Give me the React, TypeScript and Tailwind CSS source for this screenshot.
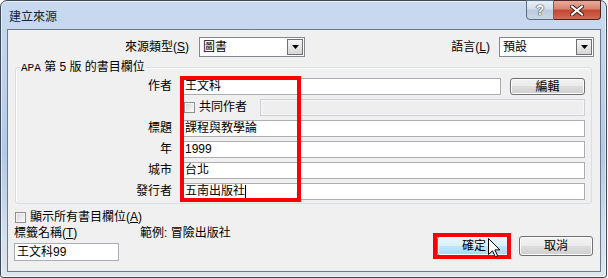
import React from "react";

function Checkbox() {
  return (
    <span className="block w-[11px] h-[11px] shrink-0 border border-[#8f8f8f] bg-linear-to-br from-[#d6d6d6] to-[#fbfbfb] shadow-[inset_0_0_0_1px_#f4f4f4]" />
  );
}

function Combo({ value, width }: { value: string; width: string }) {
  return (
    <div className={`h-[20px] ${width} border border-[#828790] bg-white flex items-center`}>
      <span className="flex-1 pl-[3px] leading-[18px]">{value}</span>
      <span className="w-[16px] h-[16px] mr-px border border-[#707070] bg-[linear-gradient(180deg,#f6f6f6,#d6d6d6)] flex items-center justify-center">
        <svg width="7" height="4" viewBox="0 0 7 4">
          <path d="M0 0H7L3.5 4Z" fill="#000" />
        </svg>
      </span>
    </div>
  );
}

function Field({ children, className = "" }: { children?: React.ReactNode; className?: string }) {
  return (
    <div className={`h-[17px] border border-[#abadb3] bg-white pl-px leading-[15px] whitespace-nowrap flex items-center ${className}`}>
      {children}
    </div>
  );
}

function Btn({ label, hover = false, className = "" }: { label: string; hover?: boolean; className?: string }) {
  const look = hover
    ? "border-[#3c7fb1] bg-[linear-gradient(180deg,#eaf6fd_0%,#d9f0fc_49%,#bee6fd_50%,#a7d9f5_100%)] shadow-[inset_0_0_0_1px_#f4fbfe]"
    : "border-[#707070] bg-[linear-gradient(180deg,#f2f2f2_0%,#ebebeb_49%,#dddddd_50%,#cfcfcf_100%)] shadow-[inset_0_0_0_1px_#fcfcfc]";
  return (
    <div className={`border rounded-[3px] flex items-center justify-center ${look} ${className}`}>{label}</div>
  );
}

function Row({ label, children }: { label: string; children: React.ReactNode }) {
  return (
    <div className="h-[17px] flex items-center">
      <div className="w-[156px] text-right leading-[17px]">{label}</div>
      <div className="ml-[11px] flex-1 flex items-center">{children}</div>
    </div>
  );
}

export default function App() {
  return (
    <div className="relative w-[608px] h-[278px] bg-white text-[12px] text-black font-['Liberation_Sans','Noto_Sans_CJK_TC',sans-serif]">
      <div className="w-[607px] h-[278px] rounded-t-[7px] rounded-b-[3px] border border-[#3c4a5c] bg-[linear-gradient(180deg,#c9daef_0%,#bcd0ea_35%,#b3c9e5_55%,#d3dfec_85%,#dfe6ee_100%)] shadow-[inset_0_0_0_1px_rgba(255,255,255,0.55)] flex flex-col">
        {/* title bar */}
        <div className="h-[28px] flex items-start">
          <div className="pl-[8px] pt-[8px] leading-[16px] text-[12px] text-[#14233a]">建立來源</div>
          <div className="ml-auto -mt-px mr-[5px] flex">
            <div className="w-[28px] h-[20px] rounded-bl-[4px] border border-[#5b6b80] bg-[linear-gradient(180deg,#e8eef6_0%,#d3deeb_45%,#bccbdc_50%,#c9d6e5_100%)] flex items-center justify-center">
              <span className="text-[14px] leading-[14px] font-bold text-white [text-shadow:0_0_1px_#333,0_0_1px_#333,0_0_1px_#333]">?</span>
            </div>
            <div className="w-[47px] h-[20px] rounded-br-[4px] border border-l-0 border-[#4b2424] bg-[linear-gradient(180deg,#e9a99c_0%,#d9826f_45%,#c5452f_50%,#d26a53_100%)] flex items-center justify-center">
              <svg width="14" height="11" viewBox="0 0 14 11">
                <path d="M2 1.5L12 9.5M12 1.5L2 9.5" stroke="#3a2020" strokeWidth="4" strokeLinecap="square" />
                <path d="M2 1.5L12 9.5M12 1.5L2 9.5" stroke="#ffffff" strokeWidth="2" strokeLinecap="square" />
              </svg>
            </div>
          </div>
        </div>

        {/* client area */}
        <div className="ml-[6px] w-[594px] h-[243px] border border-[#6b7a8e] bg-[#f0f0f0] flex flex-col">
          {/* row 1 */}
          <div className="mt-[7px] h-[20px] flex items-center pr-[6px]">
            <div className="w-[181px] text-right leading-[20px]">
              來源類型(<span className="underline">S</span>)
            </div>
            <Combo value="圖書" width="ml-[10px] w-[106px]" />
            <div className="flex-1 text-right leading-[20px]">
              語言(<span className="underline">L</span>)
            </div>
            <Combo value="預設" width="ml-[9px] w-[95px]" />
          </div>

          {/* group box */}
          <div className="relative ml-[7px] mr-[8px] mt-[10px] border border-[#d5dfe5] rounded-[3px] shadow-[inset_1px_1px_0_#ffffff] pt-[10px] pb-[3px] pl-0 pr-[6px] flex flex-col gap-[4px]">
            <div className="absolute left-[4px] -top-[8px] px-px bg-[#f0f0f0] leading-[14px] whitespace-nowrap">
              <span className="font-['Liberation_Mono',monospace] text-[11px]">APA</span> 第 5 版 的書目欄位
            </div>
            <Row label="作者">
              <Field className="flex-1">王文科</Field>
              <Btn label="編輯" className="ml-[9px] w-[75px] h-[17px]" />
            </Row>
            <Row label="">
              <div className="w-[77px] flex items-center">
                <span className="ml-px">
                  <Checkbox />
                </span>
                <span className="ml-[4px] leading-[17px]">共同作者</span>
              </div>
              <div className="flex-1 h-[17px] border border-[#cdd0d6] bg-[#eeeeee] shadow-[inset_0_0_0_1px_#f6f6f6]" />
            </Row>
            <Row label="標題">
              <Field className="flex-1">課程與教學論</Field>
            </Row>
            <Row label="年">
              <Field className="flex-1">1999</Field>
            </Row>
            <Row label="城市">
              <Field className="flex-1">台北</Field>
            </Row>
            <Row label="發行者">
              <Field className="flex-1">
                五南出版社
                <span className="inline-block w-px h-[13px] bg-black" />
              </Field>
            </Row>
          </div>

          {/* show all */}
          <div className="mt-[5px] h-[16px] pl-[7px] flex items-center">
            <Checkbox />
            <span className="ml-[4px] leading-[16px]">
              顯示所有書目欄位(<span className="underline">A</span>)
            </span>
          </div>

          {/* bottom row */}
          <div className="flex items-start pl-[6px] pr-[7px]">
            <div className="w-[126px] flex flex-col">
              <div className="leading-[16px]">
                標籤名稱(<span className="underline">T</span>)
              </div>
              <div className="mt-[2px] w-[105px] h-[18px] border border-[#abadb3] bg-white pl-[2px] leading-[16px]">王文科99</div>
            </div>
            <div className="leading-[16px]">範例: 冒險出版社</div>
            <div className="ml-auto mt-[11px] flex gap-[8px]">
              <Btn label="確定" hover className="w-[74px] h-[20px]" />
              <Btn label="取消" className="w-[74px] h-[20px]" />
            </div>
          </div>
        </div>
      </div>

      {/* red highlight boxes */}
      <div className="absolute left-[180px] top-[76px] w-[121px] h-[126px] border-4 border-[#ff0000]" />
      <div className="absolute left-[433px] top-[233px] w-[78px] h-[26px] border-4 border-[#ff0000]" />

      {/* mouse cursor */}
      <svg className="absolute left-[488px] top-[238px]" width="13" height="20" viewBox="0 0 13 20">
        <path d="M0.5 0.5 L0.5 16.5 L4.5 12.8 L7.3 18.8 L9.6 17.8 L6.9 11.9 L11.8 11.9 Z" fill="#ffffff" stroke="#000000" strokeWidth="1" strokeLinejoin="miter" />
      </svg>
    </div>
  );
}
